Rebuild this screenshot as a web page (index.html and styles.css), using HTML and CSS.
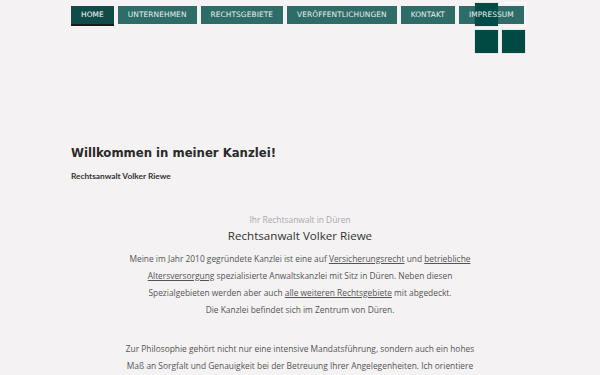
FILE: index.html
```html
<!DOCTYPE html>
<html lang="de">
<head>
  <meta charset="UTF-8">
  <meta name="viewport" content="width=device-width, initial-scale=1.0">
  <title>Rechtsanwalt Volker Riewe</title>
  <link rel="stylesheet" href="styles.css">
</head>
<body>
  <div class="page">
    <header class="header">
      <div class="logo">
        <span class="square"></span>
        <span class="square outline"></span>
        <span class="square"></span>
        <span class="square"></span>
      </div>
      <nav class="nav">
        <a href="#" class="nav-item active">Home</a>
        <a href="#" class="nav-item">Unternehmen</a>
        <a href="#" class="nav-item">Rechtsgebiete</a>
        <a href="#" class="nav-item">Veröffentlichungen</a>
        <a href="#" class="nav-item">Kontakt</a>
        <a href="#" class="nav-item">Impressum</a>
      </nav>
    </header>

    <section class="intro">
      <h1>Willkommen in meiner Kanzlei!</h1>
      <p class="tagline">Rechtsanwalt Volker Riewe</p>
    </section>

    <section class="content">
      <p class="kicker">Ihr Rechtsanwalt in Düren</p>
      <h2>Rechtsanwalt Volker Riewe</h2>
      <p>Meine im Jahr 2010 gegründete Kanzlei ist eine auf <a href="#">Versicherungsrecht</a> und <a href="#">betriebliche Altersversorgung</a> spezialisierte Anwaltskanzlei mit Sitz in Düren. Neben diesen Spezialgebieten werden aber auch <a href="#">alle weiteren Rechtsgebiete</a> mit abgedeckt.<br>Die Kanzlei befindet sich im Zentrum von Düren.</p>
      <p class="spacer">&nbsp;</p>
      <p>Zur Philosophie gehört nicht nur eine intensive Mandatsführung, sondern auch ein hohes Maß an Sorgfalt und Genauigkeit bei der Betreuung Ihrer Angelegenheiten. Ich orientiere mich dabei stets an den Interessen meiner Mandanten.</p>
    </section>
  </div>
</body>
</html>
```

FILE: styles.css
```css
/* General styling */
body {
  margin: 0;
  padding: 0;
  background: #f4f2f3;
  font-family: 'Open Sans', sans-serif;
  color: #555;
}

.page {
  width: 458px;
  margin: 0 auto;
}

/* Header and navigation */
.header {
  position: relative;
  padding-top: 6px;
}

.nav {
  position: relative;
  display: flex;
  gap: 4px;
}

.nav-item {
  display: block;
  height: 18px;
  line-height: 18px;
  padding: 0 10px;
  background: rgba(0, 76, 70, 0.81);
  color: #e8f0ef;
  font-family: 'DejaVu Sans', sans-serif;
  font-size: 7.4px;
  text-transform: uppercase;
  text-decoration: none;
  letter-spacing: 0.1px;
}

.nav-item.active {
  background: #0f4c47;
  color: #fff;
  box-shadow: 0 2px 0 #1a1a1a;
}

.logo {
  position: absolute;
  top: 2px;
  left: 403px;
  display: grid;
  grid-template-columns: 25px 25px;
  grid-auto-rows: 25px;
  gap: 2px;
}

.square {
  background: #004a44;
  border: 1px solid #e6e6e6;
  box-sizing: border-box;
}

.square.outline {
  background: transparent;
  border-color: #fff;
}

/* Intro */
.intro {
  margin-top: 122px;
}

h1 {
  margin: 0;
  font-family: 'DejaVu Sans', sans-serif;
  font-size: 11.7px;
  font-weight: bold;
  color: #2a2a2a;
}

.tagline {
  margin: 11px 0 0;
  font-family: 'Lato', sans-serif;
  font-size: 8.3px;
  font-weight: bold;
  color: #333;
}

/* Content */
.content {
  margin: 30px auto 0;
  width: 350px;
  text-align: center;
}

.kicker {
  margin: 0;
  font-size: 7.5px;
  color: #aaa;
}

h2 {
  margin: 0 0 7px;
  font-size: 11.6px;
  font-weight: normal;
  color: #333;
}

.content p {
  margin: 0;
  font-size: 8.4px;
  line-height: 17px;
}

.content p.spacer {
  height: 22px;
}

.content a {
  color: #555;
  text-decoration: underline;
}
```
